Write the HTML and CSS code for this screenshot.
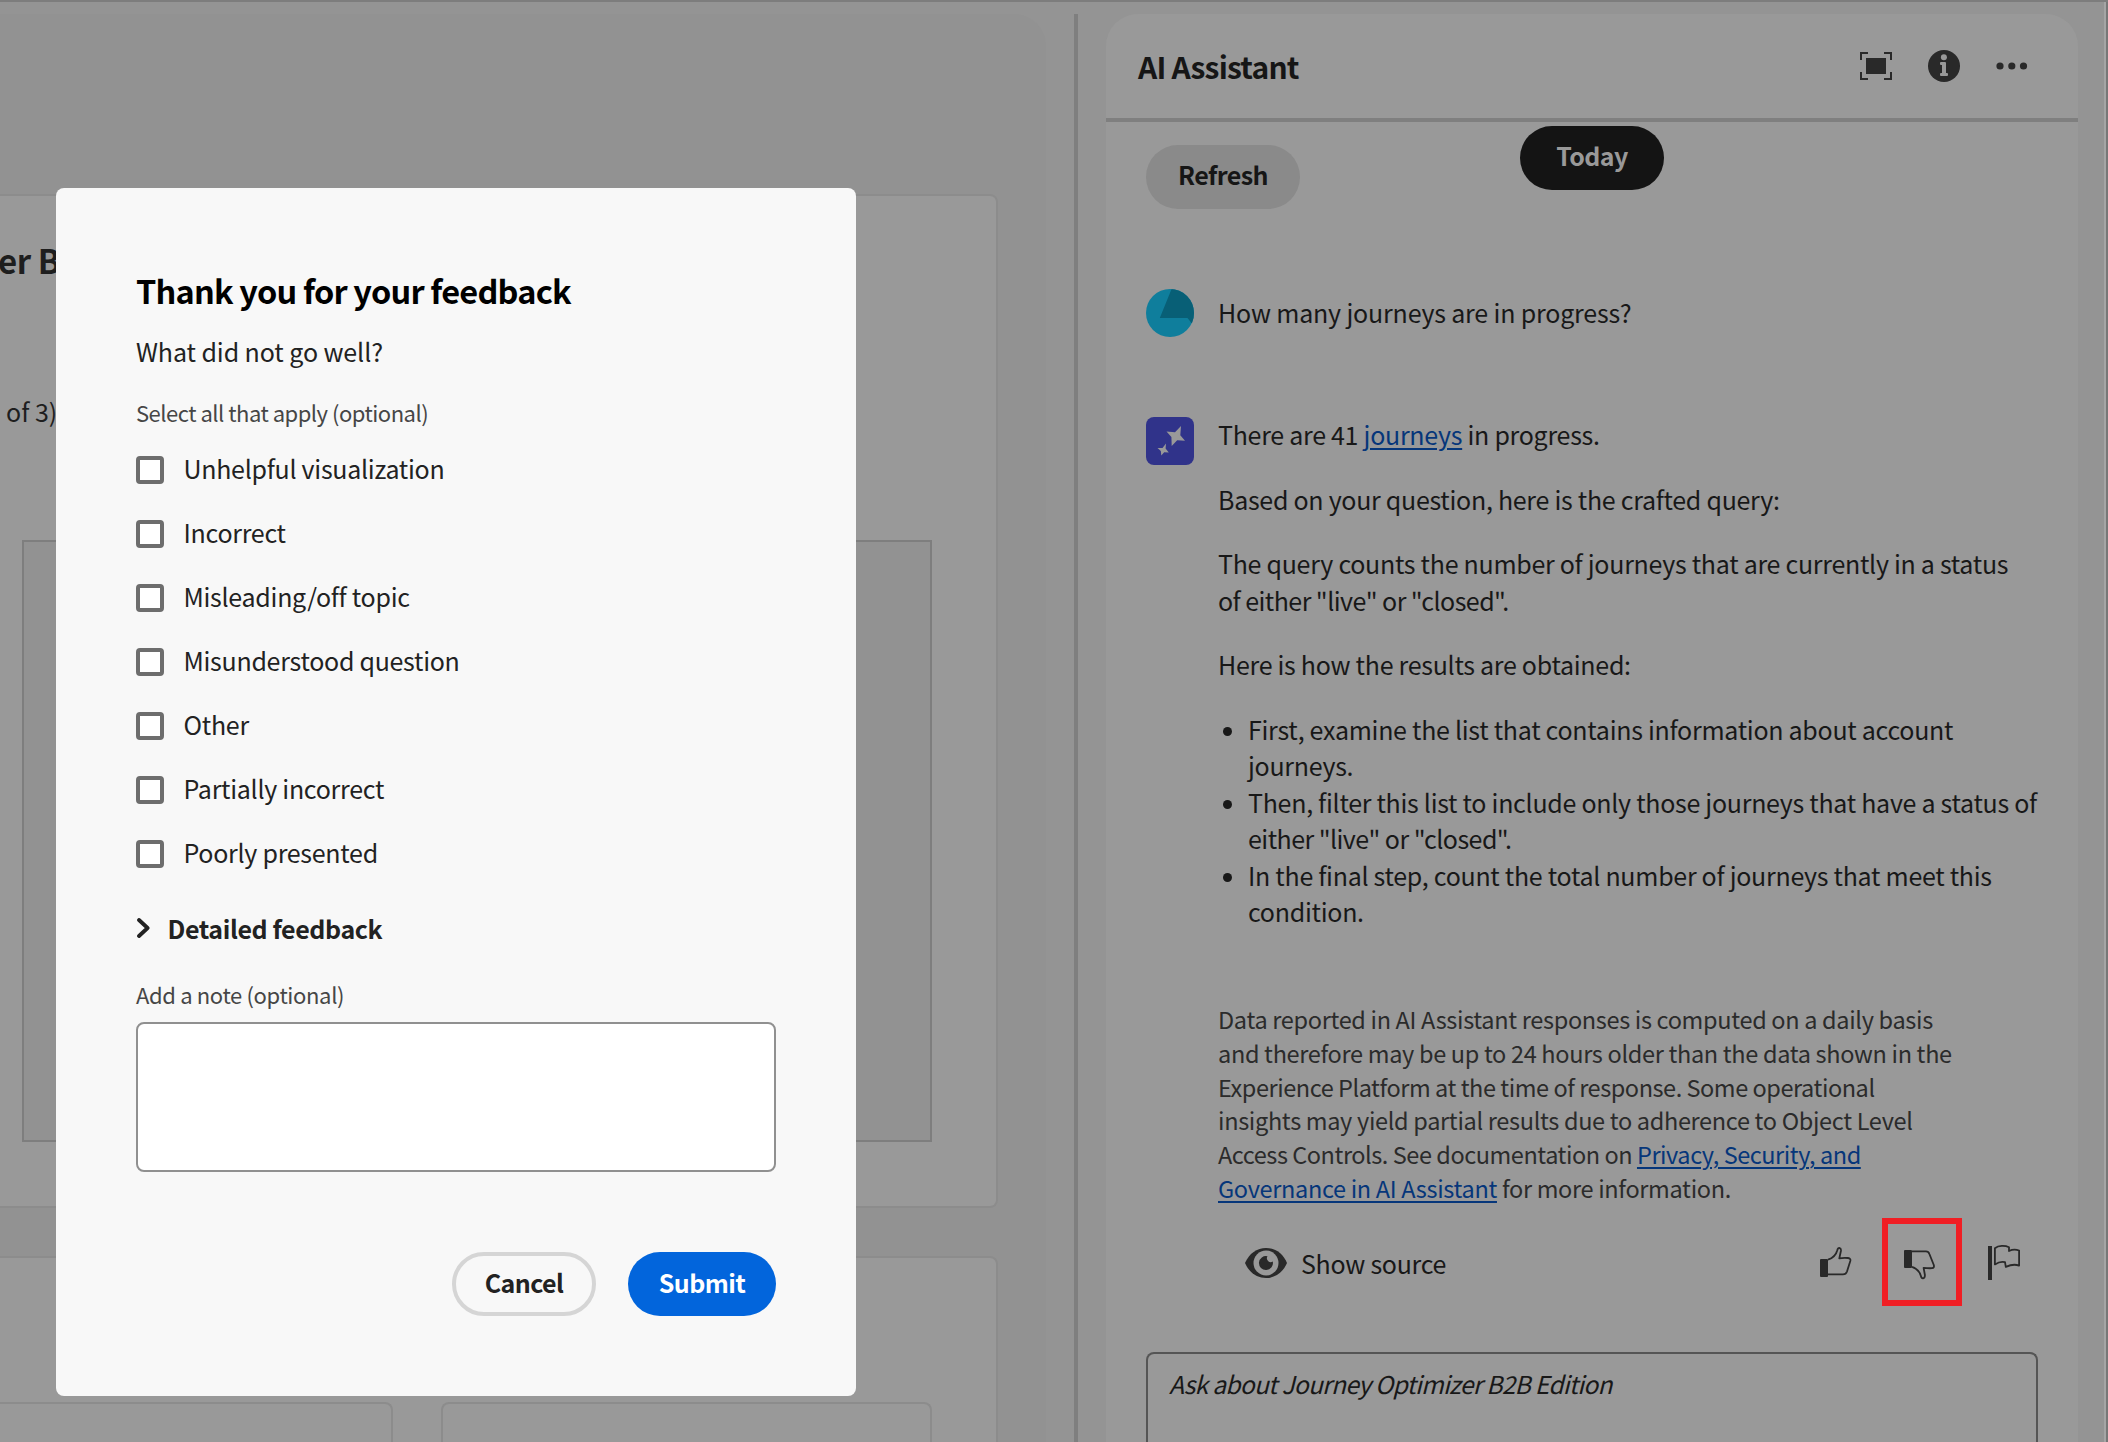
FILE: index.html
```html
<!DOCTYPE html>
<html lang="en">
<head>
<meta charset="utf-8">
<title>AI Assistant</title>
<link rel="stylesheet" href="styles.css">
</head>
<body>
<div class="app">
  <main class="workspace">
    <section class="card card-main">
      <h2 class="card-title">er B</h2>
      <p class="card-count">of 3)</p>
      <div class="preview"></div>
    </section>
    <section class="card card-lower">
      <div class="tile tile-first"></div>
      <div class="tile tile-second"></div>
    </section>
  </main>
  <div class="splitter"></div>
  <aside class="assistant">
    <header class="assistant-header">
      <h1 class="assistant-title">AI Assistant</h1>
      <div class="header-actions">
        <svg width="32" height="28" viewBox="0 0 32 28"><path d="M1 8V1H8M24 1H31V8M31 20V27H24M8 27H1V20" fill="none" stroke="#292929" stroke-width="2"/><rect x="6" y="6" width="20" height="16" fill="#292929"/></svg>
        <svg width="32" height="32" viewBox="0 0 32 32"><circle cx="16" cy="16" r="16" fill="#292929"/><circle cx="15.9" cy="7.3" r="3" fill="#999"/><path d="M13 12H17Q18 12 18 13V23H19Q20 23 20 24V25Q20 26 19 26H13Q12 26 12 25V24Q12 23 13 23H14V15H13Q12 15 12 14V13Q12 12 13 12Z" fill="#999"/></svg>
        <svg width="32" height="8" viewBox="0 0 32 8" fill="#292929"><circle cx="4" cy="4" r="3.6"/><circle cx="15.8" cy="4" r="3.6"/><circle cx="27.5" cy="4" r="3.6"/></svg>
      </div>
    </header>
    <div class="toolbar">
      <button class="pill refresh">Refresh</button>
      <span class="pill today">Today</span>
    </div>
    <div class="message">
      <svg class="avatar" width="48" height="48" viewBox="0 0 48 48"><defs><clipPath id="round"><circle cx="24" cy="24" r="24"/></clipPath></defs><g clip-path="url(#round)"><rect width="48" height="48" fill="#0f7e9c"/><path d="M26 -1L13.8 29H41.5L45.5 34H49V-1Z" fill="#085f76"/></g></svg>
      <p class="question">How many journeys are in progress?</p>
    </div>
    <div class="message">
      <svg class="avatar" width="48" height="48" viewBox="0 0 48 48"><rect width="48" height="48" rx="8" fill="#30338a"/><g fill="#999"><path d="M35 9L34.3 18.2L39 23.7L31.2 23.2L25.7 29L25.4 20L20.5 14.5L29 15.2Z"/><path d="M20 26.5L19.6 31.6L22.8 35.5L18.2 35.2L15.3 38.5L14.8 34L11.5 31L16.5 31Z"/></g></svg>
      <div class="answer">
        <p>There are 41 <a href="#">journeys</a> in progress.</p>
        <p>Based on your question, here is the crafted query:</p>
        <p>The query counts the number of journeys that are currently in a status<br><span class="tight">of either "live" or "closed".</span></p>
        <p>Here is how the results are obtained:</p>
        <ul>
          <li>First, examine the list that contains information about account<br>journeys.</li>
          <li>Then, filter this list to include only those journeys that have a status of<br><span class="tight">either "live" or "closed".</span></li>
          <li>In the final step, count the total number of journeys that meet this<br>condition.</li>
        </ul>
        <p class="disclaimer">Data reported in AI Assistant responses is computed on a daily basis<br>and therefore may be up to 24 hours older than the data shown in the<br><span class="snug">Experience Platform at the time of response. Some operational</span><br>insights may yield partial results due to adherence to Object Level<br><span class="snug">Access Controls. See documentation on <a href="#">Privacy, Security, and</a></span><br><a href="#">Governance in AI Assistant</a> for more information.</p>
      </div>
    </div>
    <div class="feedback-row">
      <svg width="42" height="30" viewBox="0 0 42 30"><path d="M0 15C4 5.5 12 0 21 0S38 5.5 42 15C38 24.5 30 30 21 30S4 24.5 0 15Z" fill="#292929"/><circle cx="21" cy="15" r="12.5" fill="#999"/><path d="M22.5 8.2A7 7 0 1 0 27.8 13.6A3.9 3.9 0 0 1 22.5 8.2Z" fill="#292929"/></svg>
      <span class="show-source">Show source</span>
      <svg class="thumb-up" width="32" height="32" viewBox="0 0 32 32"><rect x="0" y="12" width="8" height="18" rx="1" fill="#292929"/><path d="M8 12.6C13 11 16 8 17.3 3.2Q17.8 .9 19.3 .9Q21.3 1.2 20.9 4L19.3 11.4Q23 10.6 28 11Q31 11.5 30.3 14L27 24.5Q26 27.4 23 27.4H8" fill="none" stroke="#292929" stroke-width="1.8" stroke-linejoin="round"/></svg>
      <button class="thumb-down"><svg width="32" height="30" viewBox="0 0 32 30"><rect x="0" y="0" width="8" height="18" rx="1" fill="#292929"/><path d="M8 1.4H22Q24.5 1.4 25.4 4L29.8 15Q30.6 17.8 28 18.2Q24 18.4 19.6 17.8L20.9 25Q21 28 19.2 28.3Q17.4 28.5 16.9 26C15.6 21.5 13 18.5 8 16.8" fill="none" stroke="#292929" stroke-width="1.8" stroke-linejoin="round"/></svg></button>
      <svg width="32" height="36" viewBox="0 0 32 36"><rect x="0" y="1" width="4" height="34" fill="#292929"/><path d="M6.9 3.2C10.5 .4 17 .4 21 2.2V6C24.5 4.3 28 4.3 31.1 5.5V20.6C27 19 22 20 17.8 21.8L17 17.2C13.5 16.2 10 17.4 6.9 19.4Z" fill="none" stroke="#292929" stroke-width="1.8" stroke-linejoin="round"/></svg>
    </div>
    <div class="prompt">Ask about Journey Optimizer B2B Edition</div>
  </aside>
  <div class="window-edge"></div>
</div>

<div class="dialog" role="dialog">
  <h2 class="dialog-title">Thank you for your feedback</h2>
  <p class="dialog-subtitle">What did not go well?</p>
  <p class="field-label select-label">Select all that apply (optional)</p>
  <div class="options">
    <label class="option"><span class="box"></span><span class="option-text">Unhelpful visualization</span></label>
    <label class="option"><span class="box"></span><span class="option-text">Incorrect</span></label>
    <label class="option"><span class="box"></span><span class="option-text">Misleading/off topic</span></label>
    <label class="option"><span class="box"></span><span class="option-text">Misunderstood question</span></label>
    <label class="option"><span class="box"></span><span class="option-text">Other</span></label>
    <label class="option"><span class="box"></span><span class="option-text">Partially incorrect</span></label>
    <label class="option"><span class="box"></span><span class="option-text">Poorly presented</span></label>
  </div>
  <div class="details">
    <svg width="15" height="20" viewBox="0 0 15 20"><path d="M3 2L11.6 10L3 18" fill="none" stroke="#222" stroke-width="3.8" stroke-linecap="round" stroke-linejoin="round"/></svg>
    <span>Detailed feedback</span>
  </div>
  <p class="field-label note-label">Add a note (optional)</p>
  <div class="note"></div>
  <div class="dialog-actions">
    <button class="pill cancel">Cancel</button>
    <button class="pill submit">Submit</button>
  </div>
</div>
</body>
</html>
```
FILE: styles.css
```css
* { box-sizing: border-box; }

body {
  margin: 0;
  height: 1442px;
  overflow: hidden;
  position: relative;
  background: #949494;
  color: #181818;
  font-family: "Noto Sans CJK SC", "Source Sans Pro", sans-serif;
  font-size: 25px;
  line-height: 36.4px;
  letter-spacing: -0.28px;
  white-space: nowrap;
}

h1, h2, p, ul { margin: 0; padding: 0; }
svg { display: block; flex: none; }
button { border: 0; padding: 0; background: none; font-family: inherit; }

.app {
  display: flex;
  height: 1442px;
  border-top: 2px solid #7d7d7d;
}

/* Left workspace */
.workspace {
  width: 1046px;
  margin-top: 12px;
  padding-top: 180px;
  background: #929292;
  border-top-right-radius: 32px;
}
.card {
  width: 998px;
  background: #999;
  border: 2px solid #8c8c8c;
  border-left: 0;
}
.card-main {
  height: 1014px;
  padding-top: 42px;
  border-radius: 0 8px 8px 0;
}
.card-title {
  margin-left: -2px;
  font-size: 33px;
  line-height: 44px;
  letter-spacing: -0.4px;
  color: #1e1e1e;
}
.card-count {
  margin: 111px 0 0 6px;
  line-height: 36px;
  letter-spacing: 0;
  color: #1e1e1e;
}
.preview {
  margin: 111px 0 0 22px;
  width: 910px;
  height: 602px;
  background: #929292;
  border: 2px solid #7e7e7e;
}
.card-lower {
  display: flex;
  gap: 48px;
  margin-top: 48px;
  padding-top: 144px;
  height: 186px;
  border-bottom: 0;
  border-radius: 0 8px 0 0;
}
.tile {
  height: 40px;
  border: 2px solid #8c8c8c;
  border-bottom: 0;
}
.tile-first { width: 393px; border-left: 0; border-radius: 0 8px 0 0; }
.tile-second { width: 491px; border-radius: 8px 8px 0 0; }

.splitter {
  width: 4px;
  margin: 12px 28px 0;
  background: #7f7f7f;
}

/* Assistant panel */
.assistant {
  width: 972px;
  height: 1428px;
  margin-top: 12px;
  overflow: hidden;
  background: #999;
  border-radius: 32px 32px 0 0;
}
.assistant-header {
  display: flex;
  align-items: center;
  justify-content: space-between;
  height: 108px;
  padding: 0 50px 0 32px;
  border-bottom: 4px solid #7f7f7f;
}
.assistant-title {
  font-size: 30px;
  line-height: 40px;
  letter-spacing: -0.8px;
  color: #161616;
  padding-bottom: 1px;
}
.header-actions {
  display: flex;
  align-items: center;
  gap: 36px;
}
.toolbar {
  display: flex;
  align-items: flex-start;
  gap: 220px;
  padding: 4px 0 0 40px;
  height: 87px;
}
.pill {
  display: flex;
  align-items: center;
  justify-content: center;
  height: 64px;
  padding-bottom: 5px;
  border-radius: 32px;
  font-size: 25px;
  font-weight: 700;
  line-height: 36px;
  letter-spacing: -0.6px;
}
.refresh { width: 154px; margin-top: 19px; padding-bottom: 6px; background: #8a8a8a; color: #161616; }
.today { width: 144px; padding-bottom: 6px; background: #141414; color: #999; }

.message {
  display: flex;
  align-items: flex-start;
  gap: 24px;
  padding: 80px 0 0 40px;
}
.question { margin-top: 4.6px; height: 36.4px; letter-spacing: -0.18px; margin-bottom: 7px; }
.answer { margin-top: -0.9px; }
.answer p + p { margin-top: 28.2px; }
.answer .tight { letter-spacing: -0.55px; }
.answer ul { margin-top: 28.2px; padding-left: 30px; list-style: none; }
.answer li { position: relative; }
.answer li::before {
  content: "";
  position: absolute;
  left: -25px;
  top: 16px;
  width: 9px;
  height: 9px;
  border-radius: 50%;
  background: #181818;
}
.answer a { color: #06367a; text-decoration-thickness: 2px; text-underline-offset: 3px; }
.answer .disclaimer {
  margin-top: 73.6px;
  font-size: 23.5px;
  line-height: 33.8px;
  letter-spacing: -0.32px;
  color: #2b2b2b;
}
.answer .snug { letter-spacing: -0.45px; }
.feedback-row {
  display: flex;
  align-items: center;
  height: 88px;
  margin-top: 12.7px;
  padding: 2px 58px 0 139px;
}
.show-source { margin-left: 14px; flex: 1; }
.thumb-down {
  display: flex;
  align-items: center;
  justify-content: center;
  width: 80px;
  height: 88px;
  margin: -2px 26px 0 30px;
  padding: 6px 4px 0 0;
  border: 6px solid #f01e24;
}
.prompt {
  height: 110px;
  margin: 46px 40px 0;
  padding: 12px 0 0 21px;
  border: 2px solid #555;
  border-bottom: 0;
  border-radius: 8px 8px 0 0;
  font-size: 24.5px;
  font-style: italic;
  line-height: 36px;
  letter-spacing: -0.7px;
}

.window-edge {
  width: 4px;
  margin-left: 26px;
  border-left: 2px solid #a5a5a5;
  background: #777;
}

/* Feedback dialog */
.dialog {
  position: absolute;
  left: 56px;
  top: 188px;
  width: 800px;
  height: 1208px;
  padding: 80px 80px 0;
  background: #f8f8f8;
  border-radius: 8px;
  color: #222;
}
.dialog-title {
  font-size: 32.5px;
  line-height: 44px;
  letter-spacing: -0.8px;
  color: #000;
}
.dialog-subtitle { margin-top: 19px; line-height: 40px; letter-spacing: -0.08px; }
.field-label {
  font-size: 22px;
  line-height: 32px;
  letter-spacing: -0.5px;
  color: #464646;
}
.select-label { margin-top: 25px; }
.options { margin-top: 10px; }
.option {
  display: flex;
  align-items: center;
  gap: 19.5px;
  height: 64px;
}
.box {
  width: 28px;
  height: 28px;
  border: 4px solid #6d6d6d;
  border-radius: 4px;
  background: #fff;
}
.option-text { padding-bottom: 4px; }
.details {
  display: flex;
  align-items: center;
  gap: 16.5px;
  margin-top: 24px;
  font-weight: 700;
  line-height: 36px;
  letter-spacing: -0.4px;
}
.note-label { margin-top: 32px; letter-spacing: -0.35px; }
.note {
  height: 150px;
  margin-top: 12px;
  border: 2px solid #909090;
  border-radius: 8px;
  background: #fff;
}
.dialog-actions {
  display: flex;
  justify-content: flex-end;
  gap: 32px;
  margin-top: 80px;
}
.cancel { width: 144px; border: 4px solid #d5d5d5; color: #222; }
.submit { width: 148px; background: #0265dc; color: #fff; }
```
